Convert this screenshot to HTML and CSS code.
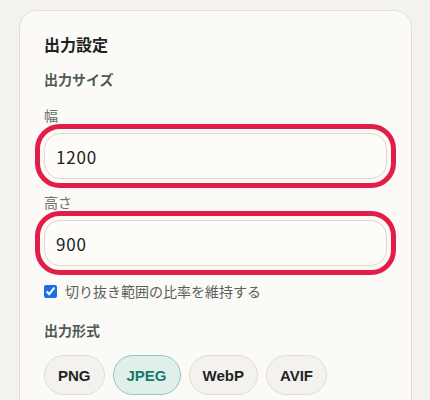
FILE: index.html
```html
<!DOCTYPE html>
<html lang="ja">
<head>
<meta charset="utf-8">
<link rel="stylesheet" href="styles.css">
</head>
<body>
<section class="card">
  <h2 class="title">出力設定</h2>
  <div class="section-label">出力サイズ</div>
  <div class="field">
    <label class="field-label">幅</label>
    <input class="text-input highlighted" type="text" value="1200">
  </div>
  <div class="field">
    <label class="field-label">高さ</label>
    <input class="text-input highlighted" type="text" value="900">
  </div>
  <label class="check-row">
    <input type="checkbox" checked>
    <span>切り抜き範囲の比率を維持する</span>
  </label>
  <div class="section-label format-label">出力形式</div>
  <div class="formats">
    <button class="pill">PNG</button>
    <button class="pill active">JPEG</button>
    <button class="pill">WebP</button>
    <button class="pill">AVIF</button>
  </div>
</section>
</body>
</html>
```

FILE: styles.css
```css
html, body {
  margin: 0;
  height: 100%;
}
body {
  background: #f3f2ee;
  padding: 10px 18px 0 19px;
  box-sizing: border-box;
  font-family: "Liberation Sans", "Noto Sans CJK JP", sans-serif;
  overflow: hidden;
}
.card {
  background: #fbfaf6;
  border: 1px solid #e3dfd7;
  border-radius: 18px;
  padding: 22px 24px 24px;
  display: flex;
  flex-direction: column;
}
.title {
  margin: 0;
  font-family: "Noto Sans CJK JP", sans-serif;
  font-size: 16px;
  line-height: 22px;
  font-weight: 700;
  color: #1c2320;
}
.section-label {
  margin-top: 14px;
  font-family: "Noto Sans CJK JP", sans-serif;
  font-size: 14px;
  line-height: 20px;
  font-weight: 700;
  color: #4f5a56;
}
.field {
  display: flex;
  flex-direction: column;
  gap: 8px;
  margin-top: 16px;
}
.field + .field {
  margin-top: 13px;
}
.field-label {
  font-family: "Noto Sans CJK JP", sans-serif;
  font-size: 14px;
  line-height: 20px;
  color: #6a706c;
}
.text-input {
  height: 46px;
  box-sizing: border-box;
  border: 1px solid #ddd9d0;
  border-radius: 16px;
  background: #fdfcf9;
  padding: 0 11px;
  font-family: "Noto Sans CJK JP", sans-serif;
  font-size: 17px;
  letter-spacing: 0.8px;
  color: #1c2220;
  margin: 0;
}
.highlighted {
  outline: 5px solid #e11d48;
  outline-offset: 4px;
}
.check-row {
  display: flex;
  align-items: center;
  gap: 8px;
  margin-top: 15px;
  font-family: "Noto Sans CJK JP", sans-serif;
  font-size: 14px;
  line-height: 20px;
  color: #59605c;
}
.check-row input {
  margin: 0;
  width: 13px;
  height: 13px;
  accent-color: #1a6fe8;
}
.format-label {
  margin-top: 19px;
}
.formats {
  display: flex;
  gap: 8px;
  margin-top: 15px;
}
.pill {
  height: 40px;
  padding: 0 13px;
  border: 1px solid #e1ddd5;
  border-radius: 999px;
  background: #f3f2ee;
  font-family: "Liberation Sans", sans-serif;
  font-size: 15px;
  font-weight: 700;
  color: #1f2422;
}
.pill.active {
  background: #e0efea;
  border-color: #8ec8c0;
  color: #17786e;
}
```
